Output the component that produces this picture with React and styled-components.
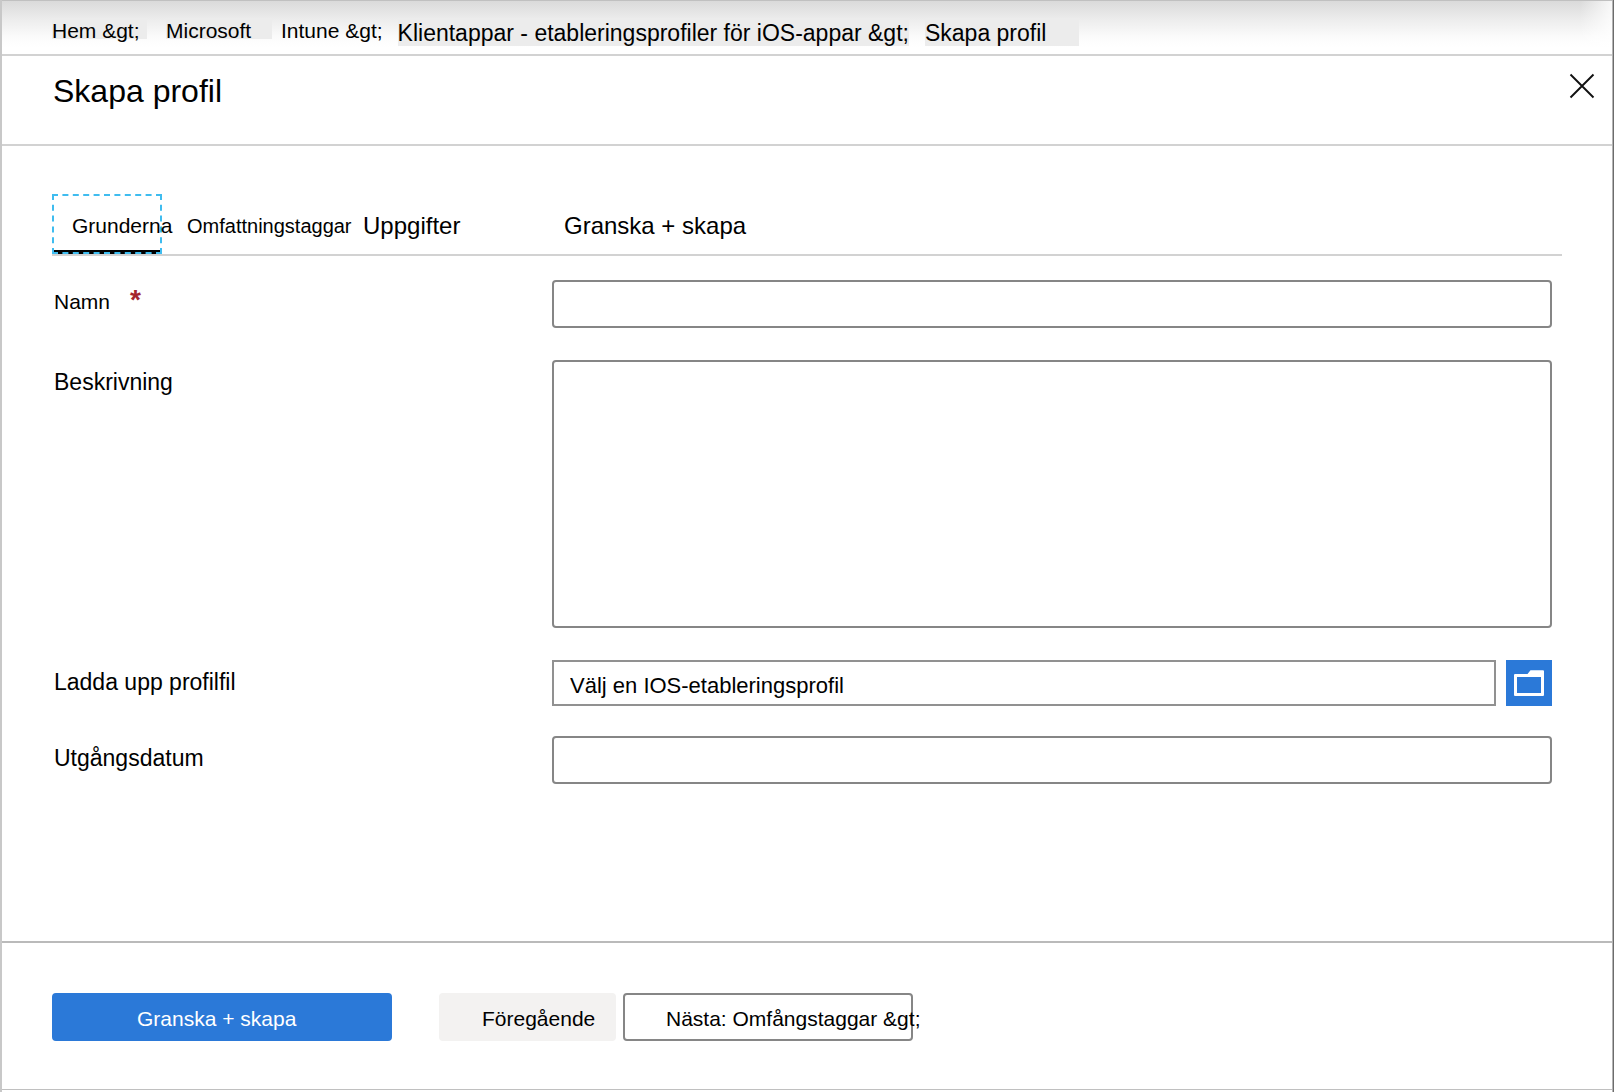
import React, { useState } from "react";
import styled, { createGlobalStyle } from "styled-components";

const GlobalStyle = createGlobalStyle`
  * {
    box-sizing: border-box;
  }

  body {
    margin: 0;
    background: #fff;
    color: #000;
    font-family: "Liberation Sans", Arial, sans-serif;
  }

  button,
  input,
  textarea {
    font-family: inherit;
    color: inherit;
  }
`;

const Page = styled.div`
  display: flex;
  flex-direction: column;
  min-height: 100vh;
  padding-bottom: 2px;
  border-left: 2px solid #c8c8c8;
  border-right: 1px solid #6c6c6c;
  box-shadow: inset -1px 0 #b4b4b4;
`;

const Breadcrumb = styled.nav`
  display: flex;
  align-items: flex-start;
  height: 56px;
  margin-right: 1px;
  padding: 17px 0 0 50px;
  border-top: 1px solid #c0c0c0;
  border-bottom: 2px solid #d2d2d2;
  background: linear-gradient(to left, rgba(255, 255, 255, 0.8), rgba(255, 255, 255, 0) 32px),
    linear-gradient(#dadada, #ececec 18px, #fbfbfb 36px, #fff 46px);
`;

const Crumb = styled.a`
  height: ${(props) => (props.$large ? "28px" : "21px")};
  min-width: ${(props) => props.$width};
  margin-right: ${(props) => props.$gap || "0"};
  background: ${(props) => (props.$plain ? "transparent" : "#ececec")};
  font-size: ${(props) => (props.$large ? "23px" : "21px")};
  line-height: ${(props) => (props.$large ? "30px" : "26px")};
  white-space: nowrap;
  color: inherit;
  text-decoration: none;
`;

const TitleBar = styled.header`
  display: flex;
  justify-content: space-between;
  align-items: flex-start;
  height: 90px;
  margin-right: 1px;
  padding: 15px 15px 0 51px;
  border-bottom: 2px solid #d2d2d2;
`;

const Title = styled.h1`
  margin: 0;
  font-size: 32px;
  font-weight: normal;
  line-height: 40px;
`;

const CloseButton = styled.button`
  display: flex;
  padding: 2px;
  border: none;
  background: none;
  cursor: pointer;
`;

const Main = styled.main`
  flex: 1;
  padding: 48px 51px 0 50px;
`;

const Tabs = styled.div`
  display: grid;
  grid-template-columns: 135px 176px 201px auto;
  justify-content: start;
  border-bottom: 2px solid #d2d2d2;
`;

const Tab = styled.button`
  width: ${(props) => (props.$active ? "110px" : "auto")};
  height: 60px;
  padding: ${(props) => (props.$active ? "18px 0 0 18px" : "18px 0 0")};
  border: 2px dashed ${(props) => (props.$active ? "#3fbcef" : "transparent")};
  border-width: ${(props) => (props.$active ? "2px" : "2px 0")};
  background: ${(props) =>
    props.$active
      ? "linear-gradient(#000, #000) center bottom / 106px 4px no-repeat border-box"
      : "none"};
  display: flex;
  align-items: flex-start;
  font-size: ${(props) => props.$size};
  line-height: 24px;
  white-space: nowrap;
  cursor: pointer;
  outline: none;
`;

const Form = styled.form`
  display: flex;
  flex-direction: column;
  gap: 32px;
  padding: 24px 10px 0 0;
`;

const FormGroup = styled.div`
  display: grid;
  grid-template-columns: 500px 1fr;
  align-items: start;
`;

const FileGroup = styled(FormGroup)`
  margin-bottom: -2px;
`;

const Label = styled.label`
  padding-left: 2px;
  font-size: ${(props) => (props.$small ? "21px" : "23px")};
  line-height: 44px;
`;

const Required = styled.span`
  margin-left: 20px;
  font-size: 28px;
  font-weight: bold;
  line-height: 1px;
  color: #a4262c;
`;

const Input = styled.input`
  width: 100%;
  height: 48px;
  padding: 0 16px;
  border: 2px solid #868686;
  border-radius: 4px;
  background: #fff;
  font-size: 22px;
  outline: none;
`;

const TextArea = styled.textarea`
  display: block;
  width: 100%;
  height: 268px;
  padding: 12px 16px;
  border: 2px solid #868686;
  border-radius: 4px;
  background: #fff;
  font-size: 22px;
  resize: none;
  outline: none;
`;

const FilePicker = styled.div`
  display: flex;
  gap: 10px;
`;

const FileInput = styled(Input)`
  flex: 1;
  height: 46px;
  padding-top: 6px;
  border-color: #919191;
  border-radius: 0;
`;

const BrowseButton = styled.button`
  width: 46px;
  height: 46px;
  padding: 0;
  border: none;
  background: #2b79d8;
  cursor: pointer;
`;

const Footer = styled.footer`
  display: flex;
  margin-right: 1px;
  padding: 50px 50px 48px;
  border-top: 2px solid #bababa;
  border-bottom: 1px solid #c0c0c0;
`;

const Button = styled.button`
  width: 290px;
  height: 48px;
  padding: 4px 0 0 41px;
  border: 2px solid #868686;
  border-radius: 4px;
  background: #fff;
  font-size: 21px;
  text-align: left;
  white-space: nowrap;
  cursor: pointer;
`;

const PrimaryButton = styled(Button)`
  width: 340px;
  margin-right: 47px;
  padding-left: 83px;
  border-color: #2b79d8;
  background: #2b79d8;
  color: #fff;
`;

const PreviousButton = styled(Button)`
  width: 177px;
  margin-right: 7px;
  border-color: #f3f2f1;
  background: #f3f2f1;
`;

const CloseIcon = () => (
  <svg width="26" height="26" viewBox="0 0 26 26" aria-hidden="true">
    <path d="M1.5 1.5 24.5 24.5M24.5 1.5 1.5 24.5" stroke="#111" strokeWidth="1.9" />
  </svg>
);

const FolderIcon = () => (
  <svg width="46" height="46" viewBox="0 0 46 46" aria-hidden="true">
    <path
      fill="#fff"
      fillRule="evenodd"
      d="M9 14h12.5l3-3.7H37a1 1 0 0 1 1 1V35a1 1 0 0 1-1 1H9a1 1 0 0 1-1-1V15a1 1 0 0 1 1-1zM11 17v16h24V17z"
    />
  </svg>
);

const tabs = [
  { id: "basics", text: "Grunderna", size: "21px" },
  { id: "scope", text: "Omfattningstaggar", size: "20px" },
  { id: "assignments", text: "Uppgifter", size: "24px" },
  { id: "review", text: "Granska + skapa", size: "24px" },
];

const App = () => {
  const [activeTab, setActiveTab] = useState("basics");
  const [name, setName] = useState("");
  const [description, setDescription] = useState("");
  const [expires, setExpires] = useState("");

  return (
    <Page>
      <GlobalStyle />
      <Breadcrumb>
        <Crumb href="#" $width="95px" $gap="19px">{"Hem &gt;"}</Crumb>
        <Crumb href="#" $width="106px" $gap="9px">Microsoft</Crumb>
        <Crumb href="#" $width="101px" $gap="15px" $plain>{"Intune &gt;"}</Crumb>
        <Crumb href="#" $large $width="511px" $gap="16px">
          {"Klientappar - etableringsprofiler för iOS-appar &gt;"}
        </Crumb>
        <Crumb href="#" $large $width="154px">Skapa profil</Crumb>
      </Breadcrumb>

      <TitleBar>
        <Title>Skapa profil</Title>
        <CloseButton type="button" aria-label="Stäng">
          <CloseIcon />
        </CloseButton>
      </TitleBar>

      <Main>
        <Tabs role="tablist">
          {tabs.map((tab) => (
            <Tab
              key={tab.id}
              type="button"
              role="tab"
              aria-selected={activeTab === tab.id}
              $active={activeTab === tab.id}
              $size={tab.size}
              onClick={() => setActiveTab(tab.id)}
            >
              {tab.text}
            </Tab>
          ))}
        </Tabs>

        <Form id="profile" onSubmit={(e) => e.preventDefault()}>
          <FormGroup>
            <Label htmlFor="name" $small>
              Namn<Required>*</Required>
            </Label>
            <Input
              id="name"
              type="text"
              value={name}
              onChange={(e) => setName(e.target.value)}
              required
            />
          </FormGroup>
          <FormGroup>
            <Label htmlFor="description">Beskrivning</Label>
            <TextArea
              id="description"
              value={description}
              onChange={(e) => setDescription(e.target.value)}
            />
          </FormGroup>
          <FileGroup>
            <Label htmlFor="file">Ladda upp profilfil</Label>
            <FilePicker>
              <FileInput id="file" type="text" value="Välj en IOS-etableringsprofil" readOnly />
              <BrowseButton type="button" aria-label="Bläddra">
                <FolderIcon />
              </BrowseButton>
            </FilePicker>
          </FileGroup>
          <FormGroup>
            <Label htmlFor="expires">Utgångsdatum</Label>
            <Input
              id="expires"
              type="text"
              value={expires}
              onChange={(e) => setExpires(e.target.value)}
            />
          </FormGroup>
        </Form>
      </Main>

      <Footer>
        <PrimaryButton type="submit" form="profile">Granska + skapa</PrimaryButton>
        <PreviousButton type="button">Föregående</PreviousButton>
        <Button type="button">{"Nästa: Omfångstaggar &gt;"}</Button>
      </Footer>
    </Page>
  );
};

export default App;
